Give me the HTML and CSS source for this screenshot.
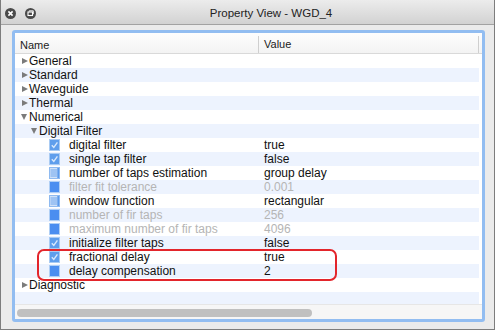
FILE: index.html
```html
<!DOCTYPE html>
<html>
  <head>
    <title>Property View - WGD_4</title>
    <link rel="stylesheet" href="styles.css">
  </head>
  <body>
    <div class="window">
      <div class="titlebar">
        <div class="title-buttons">
          <svg class="tb-btn" width="11" height="11" viewBox="0 0 11 11">
            <circle cx="5.5" cy="5.5" r="5.5" fill="#4a4a4a" />
            <path d="M3.4 3.4 L7.6 7.6 M7.6 3.4 L3.4 7.6" stroke="#fff" stroke-width="1.6" />
          </svg>
          <svg class="tb-btn" width="11" height="11" viewBox="0 0 11 11">
            <circle cx="5.5" cy="5.5" r="5.5" fill="#4a4a4a" />
            <rect x="3" y="4" width="4.5" height="3.5" fill="none" stroke="#fff" stroke-width="1.1" />
            <path d="M4.2 3.6 V2.8 H8.3 V6 H7.6" fill="none" stroke="#fff" stroke-width="0.9" />
          </svg>
        </div>
        <div class="title">Property View - WGD_4</div>
      </div>

      <div class="content">
        <div class="panel">
          <div class="header">
            <div class="col-name">Name</div>
            <div class="col-value">Value</div>
          </div>

          <div class="rows">
            <div class="row"><div class="name lvl1"><span class="tri right"></span>General</div><div class="value"></div></div>
            <div class="row"><div class="name lvl1"><span class="tri right"></span>Standard</div><div class="value"></div></div>
            <div class="row"><div class="name lvl1"><span class="tri right"></span>Waveguide</div><div class="value"></div></div>
            <div class="row"><div class="name lvl1"><span class="tri right"></span>Thermal</div><div class="value"></div></div>
            <div class="row"><div class="name lvl1"><span class="tri down"></span>Numerical</div><div class="value"></div></div>
            <div class="row"><div class="name lvl2"><span class="tri down"></span>Digital Filter</div><div class="value"></div></div>

            <div class="row">
              <div class="name item">
                <svg class="icon" width="11" height="12" viewBox="0 0 11 12"><rect x="0.5" y="0.5" width="10" height="11" fill="#5f9eec" stroke="#a9cbf3" /><path d="M2.8 6.2 L4.8 8.4 L8.4 3.4" fill="none" stroke="#d8e8fc" stroke-width="1.4" /></svg>
                digital filter
              </div>
              <div class="value">true</div>
            </div>
            <div class="row">
              <div class="name item">
                <svg class="icon" width="11" height="12" viewBox="0 0 11 12"><rect x="0.5" y="0.5" width="10" height="11" fill="#5f9eec" stroke="#a9cbf3" /><path d="M2.8 6.2 L4.8 8.4 L8.4 3.4" fill="none" stroke="#d8e8fc" stroke-width="1.4" /></svg>
                single tap filter
              </div>
              <div class="value">false</div>
            </div>
            <div class="row">
              <div class="name item">
                <svg class="icon" width="11" height="12" viewBox="0 0 11 12"><rect x="0.5" y="0.5" width="10" height="11" fill="#cfe1f8" stroke="#8fbaf0" /><path d="M1.5 3 H8 M1.5 5 H8 M1.5 7 H8 M1.5 9 H8" stroke="#6ea6ee" stroke-width="1" /><rect x="8.3" y="1" width="1.7" height="10" fill="#5b9aec" /></svg>
                number of taps estimation
              </div>
              <div class="value">group delay</div>
            </div>
            <div class="row disabled">
              <div class="name item">
                <svg class="icon" width="11" height="12" viewBox="0 0 11 12"><rect x="0.5" y="0.5" width="10" height="11" fill="#4b8ef0" stroke="#b0cff5" /></svg>
                filter fit tolerance
              </div>
              <div class="value">0.001</div>
            </div>
            <div class="row">
              <div class="name item">
                <svg class="icon" width="11" height="12" viewBox="0 0 11 12"><rect x="0.5" y="0.5" width="10" height="11" fill="#cfe1f8" stroke="#8fbaf0" /><path d="M1.5 3 H8 M1.5 5 H8 M1.5 7 H8 M1.5 9 H8" stroke="#6ea6ee" stroke-width="1" /><rect x="8.3" y="1" width="1.7" height="10" fill="#5b9aec" /></svg>
                window function
              </div>
              <div class="value">rectangular</div>
            </div>
            <div class="row disabled">
              <div class="name item">
                <svg class="icon" width="11" height="12" viewBox="0 0 11 12"><rect x="0.5" y="0.5" width="10" height="11" fill="#4b8ef0" stroke="#b0cff5" /></svg>
                number of fir taps
              </div>
              <div class="value">256</div>
            </div>
            <div class="row disabled">
              <div class="name item">
                <svg class="icon" width="11" height="12" viewBox="0 0 11 12"><rect x="0.5" y="0.5" width="10" height="11" fill="#4b8ef0" stroke="#b0cff5" /></svg>
                maximum number of fir taps
              </div>
              <div class="value">4096</div>
            </div>
            <div class="row">
              <div class="name item">
                <svg class="icon" width="11" height="12" viewBox="0 0 11 12"><rect x="0.5" y="0.5" width="10" height="11" fill="#5f9eec" stroke="#a9cbf3" /><path d="M2.8 6.2 L4.8 8.4 L8.4 3.4" fill="none" stroke="#d8e8fc" stroke-width="1.4" /></svg>
                initialize filter taps
              </div>
              <div class="value">false</div>
            </div>
            <div class="row">
              <div class="name item">
                <svg class="icon" width="11" height="12" viewBox="0 0 11 12"><rect x="0.5" y="0.5" width="10" height="11" fill="#5f9eec" stroke="#a9cbf3" /><path d="M2.8 6.2 L4.8 8.4 L8.4 3.4" fill="none" stroke="#d8e8fc" stroke-width="1.4" /></svg>
                fractional delay
              </div>
              <div class="value">true</div>
            </div>
            <div class="row">
              <div class="name item">
                <svg class="icon" width="11" height="12" viewBox="0 0 11 12"><rect x="0.5" y="0.5" width="10" height="11" fill="#4b8ef0" stroke="#b0cff5" /></svg>
                delay compensation
              </div>
              <div class="value">2</div>
            </div>
            <div class="row"><div class="name lvl1"><span class="tri right"></span>Diagnostic</div><div class="value"></div></div>
            <div class="row filler"></div>
          </div>

          <div class="hscroll">
            <div class="thumb"></div>
          </div>
        </div>
      </div>

      <div class="highlight"></div>
    </div>
  </body>
</html>
```

FILE: styles.css
```css
body {
  margin: 0;
  font-family: "Liberation Sans", Arial, sans-serif;
  background: #fff;
}
.window {
  position: relative;
  width: 495px;
  height: 330px;
  box-sizing: border-box;
  border: 1px solid #7d7d7d;
  border-top: 0;
  background: #ebebeb;
  display: flex;
  flex-direction: column;
}
.titlebar {
  height: 24px;
  display: flex;
  align-items: center;
  background: linear-gradient(#ececec, #d2d2d2);
  border-bottom: 1px solid #a2a2a2;
  position: relative;
}
.title-buttons {
  display: flex;
  gap: 9px;
  padding-left: 4px;
  padding-top: 2px;
}
.title {
  flex: 1;
  text-align: center;
  font-size: 11.5px;
  color: #222;
  padding-left: 12px;
  padding-top: 2px;
}
.content {
  flex: 1;
  padding: 5px 9px 5px 11px;
}
.panel {
  border: 3px solid #92bdf1;
  border-radius: 3px;
  background: #fff;
  display: flex;
  flex-direction: column;
}
.header {
  height: 20px;
  display: grid;
  grid-template-columns: 243px 1fr;
  align-items: end;
  font-size: 11px;
  color: #222;
  border-bottom: 1px solid #d9d9d9;
  background: linear-gradient(#fdfdfd, #f3f3f3);
}
.col-name {
  padding-left: 5px;
  padding-bottom: 2px;
}
.col-value {
  padding-left: 5px;
  border-left: 1px solid #cfcfcf;
  border-right: 1px solid #cfcfcf;
  margin-right: 3px;
  height: 17px;
  line-height: 16px;
}
.rows {
  display: flex;
  flex-direction: column;
}
.row {
  height: 14px;
  display: grid;
  grid-template-columns: 243px 1fr;
  align-items: center;
  font-size: 12px;
  color: #111;
  margin-right: 3px;
}
.row:nth-child(even) {
  background: #edf3fe;
}
.row.filler {
  height: 12px;
}
.row.disabled {
  color: #b5b5b5;
}
.name {
  display: flex;
  align-items: center;
  white-space: nowrap;
}
.lvl1 {
  padding-left: 7px;
}
.lvl2 {
  padding-left: 17px;
}
.item {
  padding-left: 34px;
  gap: 9px;
}
.value {
  padding-left: 6px;
}
.tri {
  display: inline-block;
  width: 0;
  height: 0;
  margin-right: 1px;
}
.tri.right {
  border-left: 6px solid #7b7b7b;
  border-top: 3.5px solid transparent;
  border-bottom: 3.5px solid transparent;
}
.tri.down {
  border-top: 6px solid #7b7b7b;
  border-left: 3.5px solid transparent;
  border-right: 3.5px solid transparent;
  margin-left: -1px;
  margin-right: 2px;
}
.icon {
  flex: none;
}
.hscroll {
  height: 14px;
  background: #f6f6f6;
  border-top: 1px solid #e6e6e6;
  display: flex;
  align-items: center;
}
.thumb {
  width: 295px;
  height: 8px;
  margin-left: 2px;
  margin-top: 2px;
  border-radius: 4px;
  background: #c0c0c0;
}
.highlight {
  position: absolute;
  left: 36px;
  top: 249px;
  width: 296px;
  height: 28px;
  border: 2px solid #e3252b;
  border-radius: 7px;
}
```
